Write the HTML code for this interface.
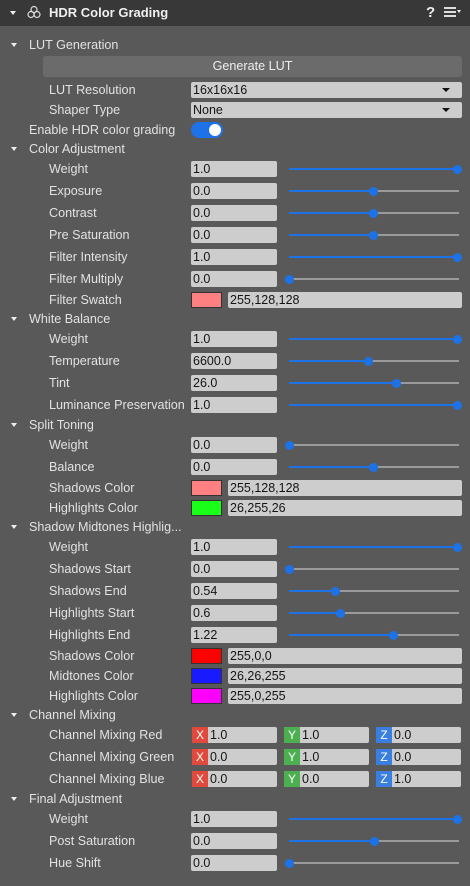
<!DOCTYPE html>
<html><head><meta charset="utf-8"><style>
*{margin:0;padding:0;box-sizing:border-box}
body{width:470px;height:886px;background:#595959;font-family:"Liberation Sans",sans-serif;font-size:12.6px;color:#e2e2e2;position:relative;overflow:hidden}
.hd{position:absolute;left:0;top:0;width:470px;height:26px;background:#383838}
.a{position:absolute;width:0;height:0;border-left:3.5px solid transparent;border-right:3.5px solid transparent;border-top:4px solid #eee}
.t{position:absolute;left:29px;height:16px;line-height:17px;white-space:nowrap}
.l{position:absolute;left:49px;height:16px;line-height:17px;white-space:nowrap}
.f{position:absolute;left:191px;width:86px;height:16px;background:#cdcdcd;border-radius:2px;color:#141414;line-height:17px;padding-left:2px;font-size:12.5px}
.w{width:271px}
.tr{position:absolute;left:289px;width:170px;height:2px;background:#9a9a9a}
.tr i{position:absolute;left:0;top:0;height:2px;background:#1e72e8}
.tr b{position:absolute;top:-3.5px;width:9px;height:9px;margin-left:-4.5px;border-radius:50%;background:#1e72e8}
.sw{position:absolute;left:191px;width:31px;height:16px;border:1px solid #333}
.ft{position:absolute;left:228px;width:234px;height:16px;background:#cdcdcd;border-radius:2px;color:#141414;line-height:17px;padding-left:2px;font-size:12.5px}
.vx{position:absolute;width:16px;height:16px;color:#fff;text-align:center;line-height:17px;font-size:12px}
.vf{position:absolute;width:69px;height:16px;background:#cdcdcd;border-radius:0 2px 2px 0;color:#141414;line-height:17px;padding-left:2px;font-size:12.5px}
.dd{position:absolute;right:12px;top:6px;border-left:4px solid transparent;border-right:4px solid transparent;border-top:4px solid #111}
</style></head><body>
<div class="hd">
<div class="a" style="left:10px;top:11px"></div>
<svg style="position:absolute;left:27px;top:5px" width="14" height="14" viewBox="0 0 14 14" fill="none" stroke="#ddd" stroke-width="1.2"><circle cx="7" cy="4.5" r="3"/><circle cx="4" cy="9.5" r="3"/><circle cx="10" cy="9.5" r="3"/></svg>
<div style="position:absolute;left:49px;top:5px;font-weight:bold;font-size:13px;color:#f0f0f0">HDR Color Grading</div>
<div style="position:absolute;left:426px;top:4px;font-weight:bold;font-size:15px;color:#eee">?</div>
<div style="position:absolute;left:444px;top:7px;width:12px"><div style="height:2px;background:#ddd;margin-bottom:2px"></div><div style="height:2px;background:#ddd;margin-bottom:2px"></div><div style="height:2px;background:#ddd"></div></div>
<div class="a" style="left:457px;top:10px;border-left-width:2.5px;border-right-width:2.5px;border-top-width:3px"></div>
</div>

<div class="a" style="left:11px;top:43px"></div><div class="t" style="top:37px">LUT Generation</div>
<div style="position:absolute;left:43px;top:56px;width:419px;height:21px;background:#6b6b6b;border-radius:3px;text-align:center;line-height:21px;color:#eee">Generate LUT</div>
<div class="l" style="top:82px">LUT Resolution</div><div class="f w" style="top:82px">16x16x16<div class="dd"></div></div>
<div class="l" style="top:102px">Shaper Type</div><div class="f w" style="top:102px">None<div class="dd"></div></div>
<div class="t" style="top:122px">Enable HDR color grading</div>
<div style="position:absolute;left:191px;top:122px;width:32px;height:16px;border-radius:8px;background:#1e72e8"><div style="position:absolute;right:2px;top:2px;width:12px;height:12px;border-radius:50%;background:#fff"></div></div>

<div class="a" style="left:11px;top:147px"></div><div class="t" style="top:141px">Color Adjustment</div>
<div class="l" style="top:161px">Weight</div><div class="f" style="top:161px">1.0</div><div class="tr" style="top:168px"><i style="width:168px"></i><b style="left:168px"></b></div>
<div class="l" style="top:183px">Exposure</div><div class="f" style="top:183px">0.0</div><div class="tr" style="top:190px"><i style="width:84px"></i><b style="left:84px"></b></div>
<div class="l" style="top:205px">Contrast</div><div class="f" style="top:205px">0.0</div><div class="tr" style="top:212px"><i style="width:84px"></i><b style="left:84px"></b></div>
<div class="l" style="top:227px">Pre Saturation</div><div class="f" style="top:227px">0.0</div><div class="tr" style="top:234px"><i style="width:84px"></i><b style="left:84px"></b></div>
<div class="l" style="top:249px">Filter Intensity</div><div class="f" style="top:249px">1.0</div><div class="tr" style="top:256px"><i style="width:168px"></i><b style="left:168px"></b></div>
<div class="l" style="top:271px">Filter Multiply</div><div class="f" style="top:271px">0.0</div><div class="tr" style="top:278px"><i style="width:0"></i><b style="left:0"></b></div>
<div class="l" style="top:292px">Filter Swatch</div><div class="sw" style="top:292px;background:#ff8080"></div><div class="ft" style="top:292px">255,128,128</div>

<div class="a" style="left:11px;top:317px"></div><div class="t" style="top:311px">White Balance</div>
<div class="l" style="top:331px">Weight</div><div class="f" style="top:331px">1.0</div><div class="tr" style="top:338px"><i style="width:168px"></i><b style="left:168px"></b></div>
<div class="l" style="top:353px">Temperature</div><div class="f" style="top:353px">6600.0</div><div class="tr" style="top:360px"><i style="width:79px"></i><b style="left:79px"></b></div>
<div class="l" style="top:375px">Tint</div><div class="f" style="top:375px">26.0</div><div class="tr" style="top:382px"><i style="width:107px"></i><b style="left:107px"></b></div>
<div class="l" style="top:397px">Luminance Preservation</div><div class="f" style="top:397px">1.0</div><div class="tr" style="top:404px"><i style="width:168px"></i><b style="left:168px"></b></div>

<div class="a" style="left:11px;top:423px"></div><div class="t" style="top:417px">Split Toning</div>
<div class="l" style="top:437px">Weight</div><div class="f" style="top:437px">0.0</div><div class="tr" style="top:444px"><i style="width:0"></i><b style="left:0"></b></div>
<div class="l" style="top:459px">Balance</div><div class="f" style="top:459px">0.0</div><div class="tr" style="top:466px"><i style="width:84px"></i><b style="left:84px"></b></div>
<div class="l" style="top:480px">Shadows Color</div><div class="sw" style="top:480px;background:#ff8080"></div><div class="ft" style="top:480px">255,128,128</div>
<div class="l" style="top:500px">Highlights Color</div><div class="sw" style="top:500px;background:#1aff1a"></div><div class="ft" style="top:500px">26,255,26</div>

<div class="a" style="left:11px;top:525px"></div><div class="t" style="top:519px">Shadow Midtones Highlig...</div>
<div class="l" style="top:539px">Weight</div><div class="f" style="top:539px">1.0</div><div class="tr" style="top:546px"><i style="width:168px"></i><b style="left:168px"></b></div>
<div class="l" style="top:561px">Shadows Start</div><div class="f" style="top:561px">0.0</div><div class="tr" style="top:568px"><i style="width:0"></i><b style="left:0"></b></div>
<div class="l" style="top:583px">Shadows End</div><div class="f" style="top:583px">0.54</div><div class="tr" style="top:590px"><i style="width:46px"></i><b style="left:46px"></b></div>
<div class="l" style="top:605px">Highlights Start</div><div class="f" style="top:605px">0.6</div><div class="tr" style="top:612px"><i style="width:51px"></i><b style="left:51px"></b></div>
<div class="l" style="top:627px">Highlights End</div><div class="f" style="top:627px">1.22</div><div class="tr" style="top:634px"><i style="width:104px"></i><b style="left:104px"></b></div>
<div class="l" style="top:648px">Shadows Color</div><div class="sw" style="top:648px;background:#ff0000"></div><div class="ft" style="top:648px">255,0,0</div>
<div class="l" style="top:668px">Midtones Color</div><div class="sw" style="top:668px;background:#1a1aff"></div><div class="ft" style="top:668px">26,26,255</div>
<div class="l" style="top:688px">Highlights Color</div><div class="sw" style="top:688px;background:#ff00ff"></div><div class="ft" style="top:688px">255,0,255</div>

<div class="a" style="left:11px;top:713px"></div><div class="t" style="top:707px">Channel Mixing</div>
<div class="l" style="top:727px">Channel Mixing Red</div>
<div class="vx" style="left:192px;top:727px;background:#e0493b">X</div><div class="vf" style="left:208px;top:727px">1.0</div>
<div class="vx" style="left:284px;top:727px;background:#4caf50">Y</div><div class="vf" style="left:300px;top:727px">1.0</div>
<div class="vx" style="left:376px;top:727px;background:#3a7fe0">Z</div><div class="vf" style="left:392px;top:727px">0.0</div>
<div class="l" style="top:749px">Channel Mixing Green</div>
<div class="vx" style="left:192px;top:749px;background:#e0493b">X</div><div class="vf" style="left:208px;top:749px">0.0</div>
<div class="vx" style="left:284px;top:749px;background:#4caf50">Y</div><div class="vf" style="left:300px;top:749px">1.0</div>
<div class="vx" style="left:376px;top:749px;background:#3a7fe0">Z</div><div class="vf" style="left:392px;top:749px">0.0</div>
<div class="l" style="top:771px">Channel Mixing Blue</div>
<div class="vx" style="left:192px;top:771px;background:#e0493b">X</div><div class="vf" style="left:208px;top:771px">0.0</div>
<div class="vx" style="left:284px;top:771px;background:#4caf50">Y</div><div class="vf" style="left:300px;top:771px">0.0</div>
<div class="vx" style="left:376px;top:771px;background:#3a7fe0">Z</div><div class="vf" style="left:392px;top:771px">1.0</div>

<div class="a" style="left:11px;top:797px"></div><div class="t" style="top:791px">Final Adjustment</div>
<div class="l" style="top:811px">Weight</div><div class="f" style="top:811px">1.0</div><div class="tr" style="top:818px"><i style="width:168px"></i><b style="left:168px"></b></div>
<div class="l" style="top:833px">Post Saturation</div><div class="f" style="top:833px">0.0</div><div class="tr" style="top:840px"><i style="width:85px"></i><b style="left:85px"></b></div>
<div class="l" style="top:855px">Hue Shift</div><div class="f" style="top:855px">0.0</div><div class="tr" style="top:862px"><i style="width:0"></i><b style="left:0"></b></div>
</body></html>
